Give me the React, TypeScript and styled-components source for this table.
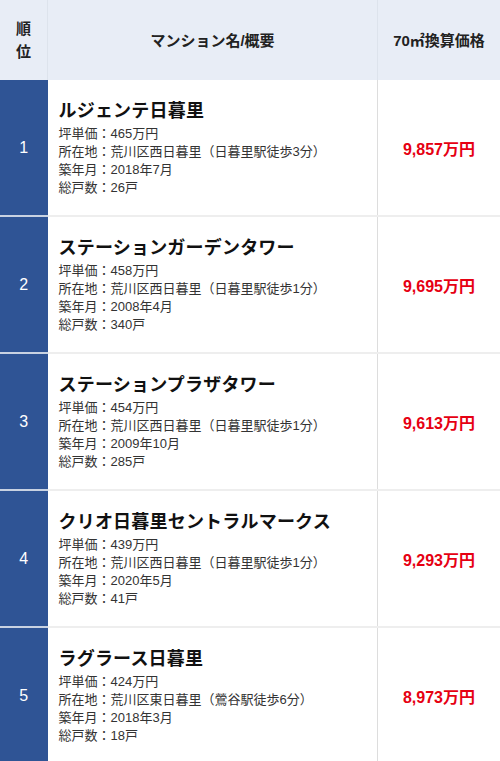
import React from 'react';
import styled, { createGlobalStyle } from 'styled-components';

const GlobalStyle = createGlobalStyle`
  body {
    margin: 0;
    background: #ffffff;
    font-family: 'Liberation Sans', 'Noto Sans CJK JP', sans-serif;
    color: #333333;
  }
`;

interface Mansion {
  rank: number;
  name: string;
  tsubo: string;
  address: string;
  built: string;
  units: string;
  price: string;
}

const mansions: Mansion[] = [
  {
    rank: 1,
    name: 'ルジェンテ日暮里',
    tsubo: '465万円',
    address: '荒川区西日暮里（日暮里駅徒歩3分）',
    built: '2018年7月',
    units: '26戸',
    price: '9,857万円',
  },
  {
    rank: 2,
    name: 'ステーションガーデンタワー',
    tsubo: '458万円',
    address: '荒川区西日暮里（日暮里駅徒歩1分）',
    built: '2008年4月',
    units: '340戸',
    price: '9,695万円',
  },
  {
    rank: 3,
    name: 'ステーションプラザタワー',
    tsubo: '454万円',
    address: '荒川区西日暮里（日暮里駅徒歩1分）',
    built: '2009年10月',
    units: '285戸',
    price: '9,613万円',
  },
  {
    rank: 4,
    name: 'クリオ日暮里セントラルマークス',
    tsubo: '439万円',
    address: '荒川区西日暮里（日暮里駅徒歩1分）',
    built: '2020年5月',
    units: '41戸',
    price: '9,293万円',
  },
  {
    rank: 5,
    name: 'ラグラース日暮里',
    tsubo: '424万円',
    address: '荒川区東日暮里（鶯谷駅徒歩6分）',
    built: '2018年3月',
    units: '18戸',
    price: '8,973万円',
  },
];

const Table = styled.table`
  width: 100%;
  border-collapse: collapse;
  table-layout: fixed;
`;

const HeadCell = styled.th<{ width?: string }>`
  width: ${(props) => props.width || 'auto'};
  height: 80px;
  padding: 0;
  background: #e8edf6;
  border-right: 1px solid #dde3ec;
  font-size: 15px;
  font-weight: bold;
  color: #222222;
  text-align: center;
  line-height: 23px;

  &:last-child {
    border-right: none;
  }
`;

const Row = styled.tr`
  border-bottom: 2px solid #eeeeee;
`;

const RankCell = styled.td`
  padding: 0;
  background: #2f5495;
  color: #ffffff;
  font-size: 16px;
  text-align: center;
  border-bottom: 2px solid #c9d2e2;
`;

const InfoCell = styled.td`
  padding: 20px 6px 18px 11px;
  border-right: 1px solid #dddddd;
  vertical-align: middle;
`;

const Title = styled.div`
  font-size: 18px;
  font-weight: bold;
  color: #111111;
  line-height: 22px;
  margin-bottom: 3px;
  letter-spacing: 0.2px;
`;

const Detail = styled.div`
  font-size: 13px;
  line-height: 18px;
  color: #333333;
  white-space: nowrap;
`;

const PriceCell = styled.td`
  padding: 0;
  text-align: center;
  font-size: 16px;
  font-weight: bold;
  color: #e60012;
`;

const App: React.FC = () => {
  return (
    <>
      <GlobalStyle />
      <Table>
        <thead>
          <tr>
            <HeadCell width="47px">
              順
              <br />
              位
            </HeadCell>
            <HeadCell>マンション名/概要</HeadCell>
            <HeadCell width="122px">70㎡換算価格</HeadCell>
          </tr>
        </thead>
        <tbody>
          {mansions.map((m) => (
            <Row key={m.rank}>
              <RankCell>{m.rank}</RankCell>
              <InfoCell>
                <Title>{m.name}</Title>
                <Detail>坪単価：{m.tsubo}</Detail>
                <Detail>所在地：{m.address}</Detail>
                <Detail>築年月：{m.built}</Detail>
                <Detail>総戸数：{m.units}</Detail>
              </InfoCell>
              <PriceCell>{m.price}</PriceCell>
            </Row>
          ))}
        </tbody>
      </Table>
    </>
  );
};

export default App;
